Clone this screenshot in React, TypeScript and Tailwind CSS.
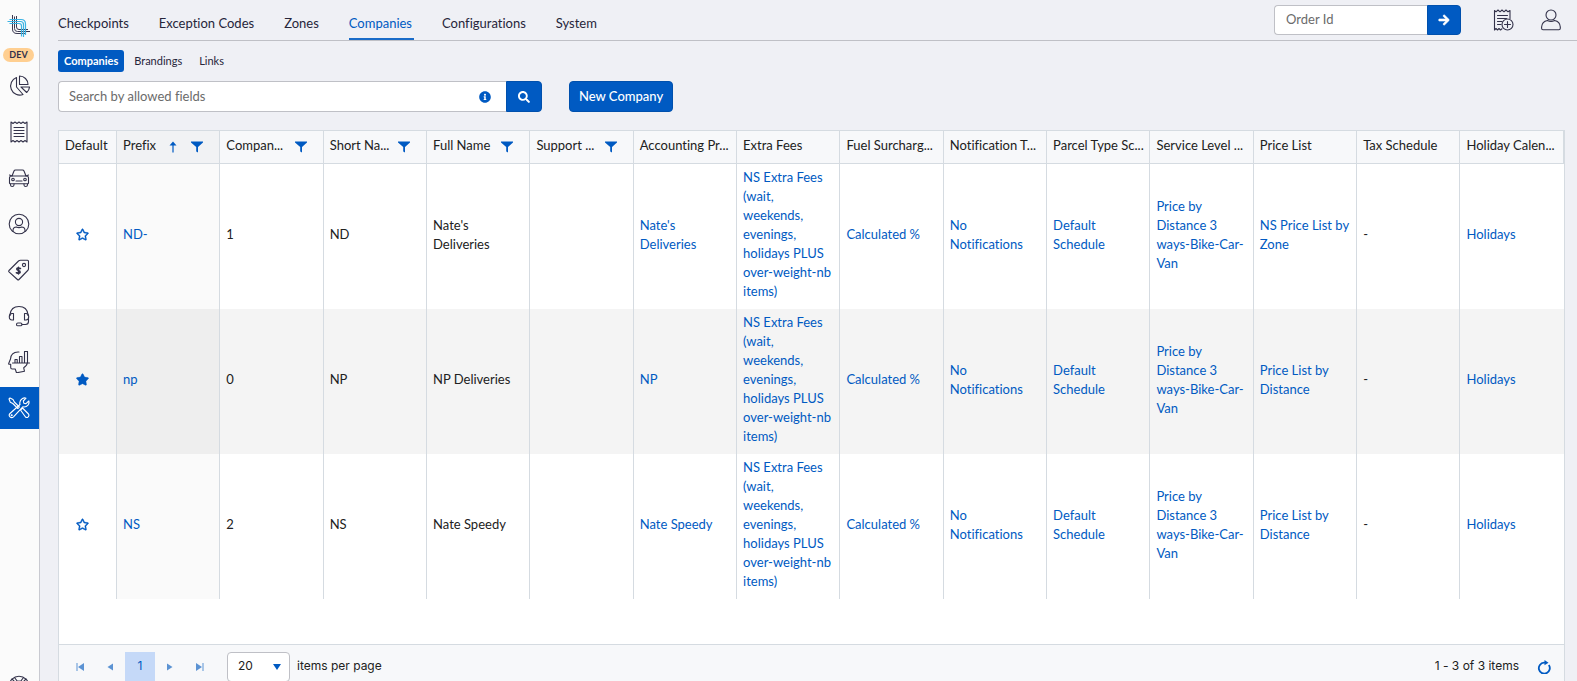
import type { ReactNode } from 'react';
import { FaArrowRight, FaInfoCircle, FaRegStar, FaSearch, FaStar } from 'react-icons/fa';

interface Company {
  isDefault: boolean;
  prefix: string;
  number: number;
  shortName: string;
  fullName: string;
  provider: string;
  priceList: string;
}

interface Column {
  title: string;
  filter?: boolean;
  sorted?: boolean;
}

const TABS = ['Checkpoints', 'Exception Codes', 'Zones', 'Companies', 'Configurations', 'System'];

const COLUMNS: Column[] = [
  { title: 'Prefix', filter: true, sorted: true },
  { title: 'Compan...', filter: true },
  { title: 'Short Na...', filter: true },
  { title: 'Full Name', filter: true },
  { title: 'Support ...', filter: true },
  { title: 'Accounting Pr...' },
  { title: 'Extra Fees' },
  { title: 'Fuel Surcharg...' },
  { title: 'Notification T...' },
  { title: 'Parcel Type Sc...' },
  { title: 'Service Level ...' },
  { title: 'Price List' },
  { title: 'Tax Schedule' },
  { title: 'Holiday Calen...' },
];

const COMPANIES: Company[] = [
  {
    isDefault: false,
    prefix: 'ND-',
    number: 1,
    shortName: 'ND',
    fullName: "Nate's Deliveries",
    provider: "Nate's Deliveries",
    priceList: 'NS Price List by Zone',
  },
  {
    isDefault: true,
    prefix: 'np',
    number: 0,
    shortName: 'NP',
    fullName: 'NP Deliveries',
    provider: 'NP',
    priceList: 'Price List by Distance',
  },
  {
    isDefault: false,
    prefix: 'NS',
    number: 2,
    shortName: 'NS',
    fullName: 'Nate Speedy',
    provider: 'Nate Speedy',
    priceList: 'Price List by Distance',
  },
];

function LineIcon({ children, className = 'size-[22px]' }: { children: ReactNode; className?: string }) {
  return (
    <svg
      viewBox="0 0 22 22"
      className={className}
      fill="none"
      stroke="currentColor"
      strokeWidth="1.1"
      strokeLinecap="round"
      strokeLinejoin="round"
      aria-hidden="true"
    >
      {children}
    </svg>
  );
}

function Logo() {
  return (
    <svg viewBox="0 0 24 24" className="size-6" fill="none" strokeWidth="1" aria-hidden="true">
      <g stroke="#3b3a52">
        <path d="M5.500 1V15q0 4.500 4.500 4.500H18" />
        <path d="M7.500 2.500V14.500q0 3 3 3H23" />
        <path d="M9.500 2V13q0 2.500 2.500 2.500H21" />
      </g>
      <g stroke="#3db3e3" strokeWidth="1.200">
        <path d="M2.500 5.500H14q4.500 0 4.500 4.500V21" />
        <path d="M0.500 7.500H13.500q3 0 3 3V23" />
        <path d="M2.500 9.500H12q2.500 0 2.500 2.500V22.500" />
      </g>
    </svg>
  );
}

const SIDEBAR = [
  {
    label: 'Dashboard',
    icon: (
      <>
        <path d="M8.500 2.500V12l6.500 7.500A9 9 0 1 1 8.500 2.500z" />
        <path d="M11.500 1v8.500H20A8.500 8.500 0 0 0 11.500 1z" />
        <path d="M13 12h8.500a8 8 0 0 1-2.800 5.500z" />
      </>
    ),
  },
  {
    label: 'Orders',
    icon: (
      <>
        <path d="M3 1l2 1.500L7 1l2 1.500L11 1l2 1.500L15 1l2 1.500L19 1v20l-2-1.500-2 1.500-2-1.500-2 1.500-2-1.500-2 1.500-2-1.500L3 21z" />
        <path d="M6 6.500h10M6 9.500h10M6 12.500h10M6 15.500h10" />
      </>
    ),
  },
  {
    label: 'Drivers',
    icon: (
      <>
        <path d="M4 9l2-5q.4-1 1.500-1h7q1.100 0 1.500 1l2 5M3.500 9h15q2 0 2 2v5q0 .8-.8.8H2.300q-.8 0-.8-.8v-5q0-2 2-2z" />
        <path d="M4 9L1.500 8M18 9l2.500-1M8 14h6M2.500 17v1q0 1.500 1.700 1.500T6 18v-1M16 17v1q0 1.500 1.700 1.500T19.500 18v-1" />
        <circle cx="5" cy="12.500" r="1.300" />
        <circle cx="17" cy="12.500" r="1.300" />
      </>
    ),
  },
  {
    label: 'Customers',
    icon: (
      <>
        <circle cx="11" cy="11" r="9.800" />
        <circle cx="11" cy="9" r="3.600" />
        <path d="M5 18.500v-1q0-3.500 3.500-3.500 2.500 1.300 5 0 3.500 0 3.500 3.500v1" />
      </>
    ),
  },
  {
    label: 'Pricing',
    icon: (
      <>
        <path d="M1 11.500L10.500 2q.8-.8 2-.8h7q1 0 1 1v7.500q0 1-.8 1.800L11 20.500q-.8.8-1.600 0L1 12.800q-.6-.6 0-1.300z" />
        <circle cx="16" cy="6" r="1.600" />
        <path d="M12.500 9.500q-3.500-1.300-3.800.6 0 1 1.700 1.500 2 .5 1.800 1.700-.5 1.700-3.900.5M10.500 8.200v6.800" strokeWidth="1.500" />
      </>
    ),
  },
  {
    label: 'Support',
    icon: (
      <>
        <path d="M2 10.500V9.500Q3 1.500 11 1.500t9 8v1M20.500 14v2.500q0 3-3 3H14" />
        <path d="M5.500 8.500v6.500H4q-2.700 0-2.700-3.200T4 8.500zM16.500 8.500v6.500H18q2.700 0 2.700-3.200T18 8.500z" />
        <rect x="8.500" y="18" width="5.500" height="2.800" rx="1.400" />
      </>
    ),
  },
  {
    label: 'Analytics',
    icon: (
      <>
        <path d="M11 1Q3 0.500 2.500 8L0.700 12.500q-.2.700.6.800h1.400v3.200q0 1.500 1.500 1.500h3l1.300 3.800 8-1.500-.8-3.500q3.300-1.800 3.600-5" />
        <path d="M4.500 12h17M7 12V8.500h2.200V12M11.500 12V5.500H14V12M16.500 12V0.500h3V12" />
      </>
    ),
  },
  {
    label: 'Settings',
    active: true,
    icon: (
      <>
        <path d="M2 1l3 1.500 1.300 2.500 5 5-1.500 1.500-5-5L2.300 5.200 1 2z" />
        <path d="M12.500 13l2-2 6 6q1 1.500-.3 2.800t-2.700.2z" />
        <path d="M12 7.500q-1-4 2.500-6 1.800-1 3.500-.3L15.300 4l.5 2.200 2.200.5 2.800-2.700q.7 2-.6 3.800Q18 10.500 14.800 9.800L5.500 19.800q-1.800 1.700-3.500 0t0-3.300z" />
        <circle cx="3.700" cy="18.200" r=".5" />
      </>
    ),
  },
];

function Sidebar() {
  return (
    <aside className="flex w-10 shrink-0 flex-col items-center border-r border-[#c9cad1] bg-[#fbfbfb] pt-3.5 text-[#33324a]">
      <a href="#home" aria-label="Home" className="mr-0.5">
        <Logo />
      </a>
      <span className="mt-2.5 mr-0.5 h-3.5 rounded-full bg-[#ffcf91] px-1.5 text-[9px] leading-3.5 font-bold">DEV</span>
      <nav className="mt-[3px] flex w-full flex-col gap-1">
        {SIDEBAR.map((item) => (
          <a
            key={item.label}
            href={`#${item.label.toLowerCase()}`}
            aria-label={item.label}
            className={`flex h-[42px] items-center justify-center pr-0.5 ${item.active ? 'bg-[#005ac2] text-white' : ''}`}
          >
            <LineIcon>{item.icon}</LineIcon>
          </a>
        ))}
      </nav>
      <a href="#help" aria-label="Help" className="mt-auto mr-0.5 -mb-[26px] flex h-[42px] shrink-0 items-center">
        <LineIcon>
          <circle cx="11" cy="11" r="9.800" />
          <circle cx="11" cy="11" r="5" />
          <path d="M4 4l4 4M6.500 2.500l3 4M18 4l-4 4M15.500 2.500l-3 4M4 18l4-4M18 18l-4-4" />
        </LineIcon>
      </a>
    </aside>
  );
}

function TopBar() {
  return (
    <header className="flex h-[41px] items-start justify-between border-b border-[#bfc0c6] pr-[15px]">
      <nav className="flex h-10 gap-7 pt-[13px] text-[13px] leading-5 text-[#26253a]">
        {TABS.map((tab) => (
          <a
            key={tab}
            href={`#${tab}`}
            className={tab === 'Companies' ? 'h-[27px] border-b-2 border-[#1a6bc8] pr-0.5 text-[#005ac2]' : 'pr-0.5'}
          >
            {tab}
          </a>
        ))}
      </nav>
      <div className="flex items-center pt-[5px]">
        <form className="flex h-[30px]">
          <input
            type="text"
            aria-label="Order Id"
            placeholder="Order Id"
            className="w-[153px] rounded-l border border-r-0 border-[#bfc0c6] bg-white px-[11px] text-[13px] placeholder:text-[#6b6b6b]"
          />
          <button
            type="button"
            aria-label="Go to order"
            className="flex w-[34px] items-center justify-center rounded-r border border-[#0050ad] bg-[#005ac2] text-white"
          >
            <FaArrowRight className="size-3" stroke="currentColor" strokeWidth="30" />
          </button>
        </form>
        <button type="button" aria-label="New order" className="ml-8 text-[#33324a]">
          <LineIcon>
            <path d="M9 19.800L7.500 21 6 19.500 4.500 21 3 19.500 1.500 21V1.500L3 2.800 5 1l2 1.800L9 1l2 1.800L13 1l2 1.800L17 1.500v8" />
            <path d="M4.500 6.500h10M4.500 9.500h9M4.500 12.500h4.500M4.500 15.500h3.500" />
            <circle cx="14.500" cy="15.500" r="5.500" />
            <path d="M14.500 12.500v6M11.500 15.500h6" />
          </LineIcon>
        </button>
        <button type="button" aria-label="Account" className="ml-[25px] text-[#33324a]">
          <LineIcon>
            <circle cx="11" cy="6" r="5" />
            <path d="M7.500 11.500q3.500 2 7 0 5.500 1 5.800 6.500v1.300q0 1.400-1.400 1.400H3q-1.400 0-1.400-1.400V18Q2 12.500 7.500 11.500z" />
          </LineIcon>
        </button>
      </div>
    </header>
  );
}

function FilterIcon() {
  return (
    <svg viewBox="0 0 12 12" className="size-3" fill="#005ac2" aria-hidden="true">
      <path d="M0 0.500h12v1L7 6v5.500L5.200 10.500V6L0 1.500z" />
    </svg>
  );
}

function HeaderCell({ column }: { column: Column }) {
  return (
    <th
      className={`h-[33px] border-r border-b border-[#d5dbe1] px-1.5 pb-1 text-left font-normal ${column.sorted ? 'bg-[#f1f2f4]' : ''}`}
    >
      <div className="flex items-center">
        <span className="min-w-0 flex-1 whitespace-nowrap">{column.title}</span>
        {column.sorted && (
          <svg viewBox="0 0 8 12" className="mt-1 mr-3.5 h-3 w-2 shrink-0" fill="#005ac2" aria-hidden="true">
            <path d="M4 0.500L7.500 4.500H4.600V11.500H3.400V4.500H0.500z" />
          </svg>
        )}
        {column.filter && (
          <button type="button" aria-label={`Filter ${column.title}`} className="mt-1 mr-2.5 shrink-0">
            <FilterIcon />
          </button>
        )}
      </div>
    </th>
  );
}

function Cell({ children, link = false, sorted = false }: { children?: ReactNode; link?: boolean; sorted?: boolean }) {
  return (
    <td
      className={`border-r border-[#d5dbe1] px-1.5 pt-1 pb-2 last:border-r-0 ${sorted ? 'bg-[#fafafa] group-even:bg-[#eeeeee]' : ''}`}
    >
      {link ? (
        <a href="#details" className="text-[#005ac2]">
          {children}
        </a>
      ) : (
        children
      )}
    </td>
  );
}

function CompanyRow({ company }: { company: Company }) {
  const Star = company.isDefault ? FaStar : FaRegStar;

  return (
    <tr className="group h-[145px] even:bg-[#f4f4f4]">
      <td className="border-r border-[#d5dbe1] px-1.5 pb-1">
        <button type="button" aria-label={`Make ${company.shortName} default`} className="ml-[11px] block text-[#005ac2]">
          <Star className="size-[13px]" stroke="currentColor" strokeWidth="16" />
        </button>
      </td>
      <Cell link sorted>{company.prefix}</Cell>
      <Cell>{company.number}</Cell>
      <Cell>{company.shortName}</Cell>
      <Cell>{company.fullName}</Cell>
      <Cell />
      <Cell link>{company.provider}</Cell>
      <Cell link>NS Extra Fees (wait, weekends, evenings, holidays PLUS over-weight-nb items)</Cell>
      <Cell link>Calculated %</Cell>
      <Cell link>No Notifications</Cell>
      <Cell link>Default Schedule</Cell>
      <Cell link>Price by Distance 3 ways-Bike-Car-Van</Cell>
      <Cell link>{company.priceList}</Cell>
      <Cell>-</Cell>
      <Cell link>Holidays</Cell>
    </tr>
  );
}

function PagerButton({ label, children }: { label: string; children: ReactNode }) {
  return (
    <button type="button" aria-label={label} disabled className="flex h-[30px] w-[30px] items-center justify-center">
      <svg viewBox="0 0 8 8" className="size-2" fill="#5c93d3" aria-hidden="true">
        {children}
      </svg>
    </button>
  );
}

function Pager() {
  return (
    <footer className="flex items-center border-t border-[#d5dbe1] bg-[#f7f8fa] px-1.5 py-[7px] font-['Inter',sans-serif] text-[12px]">
      <PagerButton label="First page">
        <path d="M0.500 0h1v8h-1zM8 0v8L2 4z" />
      </PagerButton>
      <PagerButton label="Previous page">
        <path d="M7 0.500v7L1.500 4z" />
      </PagerButton>
      <button type="button" aria-current="page" className="size-[30px] bg-[#c5d9f8] pb-0.5 text-[#005ac2]">
        1
      </button>
      <PagerButton label="Next page">
        <path d="M1 0.500v7L6.500 4z" />
      </PagerButton>
      <PagerButton label="Last page">
        <path d="M6.500 0h1v8h-1zM0 0v8l6-4z" />
      </PagerButton>
      <label className="ml-3 flex items-center gap-[7px]">
        <span className="flex h-[30px] items-center rounded border border-[#bfc0c6] bg-white pr-2">
          <select aria-label="Page size" className="w-[45px] appearance-none pb-0.5 pl-2.5" defaultValue="20">
            <option>20</option>
            <option>50</option>
          </select>
          <svg viewBox="0 0 8 6" className="h-1.5 w-2" fill="#005ac2" aria-hidden="true">
            <path d="M0 0h8L4 6z" />
          </svg>
        </span>
        <span className="pb-0.5">items per page</span>
      </label>
      <span className="ml-auto pb-0.5">1 - 3 of 3 items</span>
      <button type="button" aria-label="Refresh" className="mr-[7px] ml-[18px]">
        <svg viewBox="0 0 14 14" className="size-3.5" fill="none" stroke="#005ac2" strokeWidth="1.800" aria-hidden="true">
          <path d="M11.800 5A5.500 5.500 0 1 1 7 2.700H9" />
          <path d="M7.500 0l4 2.700L7.500 5.200z" fill="#005ac2" stroke="none" />
        </svg>
      </button>
    </footer>
  );
}

export default function App() {
  return (
    <div className="flex h-screen overflow-hidden bg-[#eff0f5] font-['Lato',sans-serif] text-[#212121] [font-variant-ligatures:none]">
      <Sidebar />
      <main className="min-w-0 flex-1 pl-[18px]">
        <TopBar />
        <nav className="mt-[9px] flex h-[22px] items-center text-[11px] text-[#26253a]">
          <a href="#companies" className="rounded-[3px] bg-[#005ac2] px-1.5 leading-[22px] font-bold text-white">
            Companies
          </a>
          <a href="#brandings" className="ml-2.5">
            Brandings
          </a>
          <a href="#links" className="ml-[17px]">
            Links
          </a>
        </nav>
        <div className="mt-[9px] flex h-[31px] gap-[27px] text-[13px]">
          <form className="flex">
            <div className="flex w-[448px] items-center rounded-l border border-r-0 border-[#bfc0c6] bg-white pr-[15px] pl-2.5">
              <input
                type="search"
                aria-label="Search companies"
                placeholder="Search by allowed fields"
                className="min-w-0 flex-1 placeholder:text-[#6b6b6b]"
              />
              <FaInfoCircle className="size-3 text-[#005ac2]" />
            </div>
            <button
              type="button"
              aria-label="Search"
              className="flex w-9 items-center justify-center rounded-r border border-[#0050ad] bg-[#005ac2] text-white"
            >
              <FaSearch className="size-3" />
            </button>
          </form>
          <button type="button" className="rounded border border-[#0050ad] bg-[#005ac2] px-[9px] font-medium text-white">
            New Company
          </button>
        </div>
        <section className="mt-[18px] mr-3 border border-[#d5dbe1] bg-white">
          <table className="w-full table-fixed border-separate border-spacing-0 text-[13px] leading-[19px]">
            <colgroup>
              <col className="w-[58px]" />
            </colgroup>
            <thead className="bg-[#f7f8fa]">
              <tr>
                <th className="border-r border-b border-[#d5dbe1] px-1.5 pb-1 text-left font-normal">Default</th>
                {COLUMNS.map((column) => (
                  <HeaderCell key={column.title} column={column} />
                ))}
              </tr>
            </thead>
            <tbody>
              {COMPANIES.map((company) => (
                <CompanyRow key={company.prefix} company={company} />
              ))}
            </tbody>
          </table>
          <div className="h-[45px]" />
          <Pager />
        </section>
      </main>
    </div>
  );
}
